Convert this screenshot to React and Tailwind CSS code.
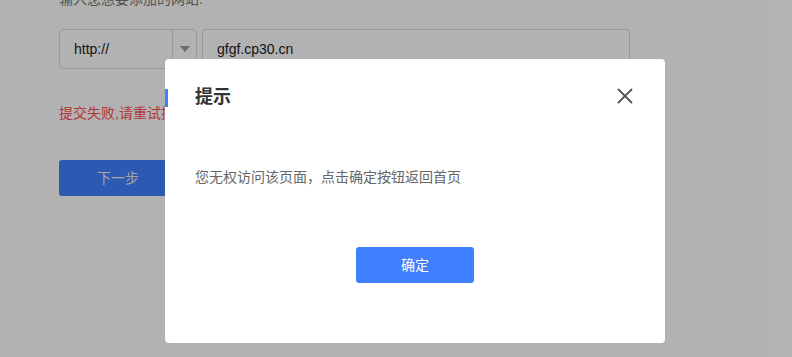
import { X } from "lucide-react";

function Page() {
  return (
    <div className="pl-[59px] pt-0">
      {/* label, cut off at the top */}
      <p className="-mt-[11px] text-sm leading-5 text-[#777]">输入您想要添加的网站:</p>

      {/* url row */}
      <div className="mt-[20px] flex gap-[5px]">
        <div className="flex h-10 w-[138px] items-center rounded border border-[#dcdcdc] bg-white">
          <span className="flex-1 pl-[14px] text-sm text-[#222]">http://</span>
          <span className="flex h-full w-6 items-center justify-center border-l border-[#dcdcdc]">
            <span className="h-0 w-0 border-x-[5px] border-t-[6px] border-x-transparent border-t-[#999]" />
          </span>
        </div>
        <div className="flex h-10 w-[428px] items-center rounded border border-[#dcdcdc] bg-white pl-[14px] text-sm text-[#222]">
          gfgf.cp30.cn
        </div>
      </div>

      <p className="mt-[34px] text-sm leading-5 text-[#ff4d4f]">提交失败,请重试提交</p>

      <button className="mt-[37px] h-9 w-[118px] rounded-[3px] bg-[#4080ff] text-sm text-[#ececec]">
        下一步
      </button>
    </div>
  );
}

function Dialog() {
  return (
    <div className="absolute left-[165px] top-[59px] flex h-[284px] w-[500px] flex-col rounded bg-white px-[30px] pt-[26px]">
      <div className="relative flex h-6 items-center justify-between">
        <span className="absolute -left-[30px] top-[4px] h-[18px] w-[3px] bg-[#4080ff]" />
        <h2 className="text-lg font-bold leading-6 text-[#333]">提示</h2>
        <X className="-mr-[3px] -mt-[2px] h-[26px] w-[26px] text-[#555]" strokeWidth={1.7} />
      </div>

      <p className="mt-[58px] text-sm leading-5 text-[#666]">您无权访问该页面，点击确定按钮返回首页</p>

      <div className="mt-[60px] flex justify-center">
        <button className="h-9 w-[118px] rounded-[3px] bg-[#4080ff] text-sm text-white">确定</button>
      </div>
    </div>
  );
}

export default function App() {
  return (
    <div
      className="relative h-[357px] w-[792px] overflow-hidden bg-white"
      style={{ fontFamily: '"Liberation Sans", "Noto Sans CJK SC", sans-serif' }}
    >
      <Page />
      {/* mask */}
      <div className="absolute inset-0 bg-black/30" />
      <Dialog />
    </div>
  );
}
